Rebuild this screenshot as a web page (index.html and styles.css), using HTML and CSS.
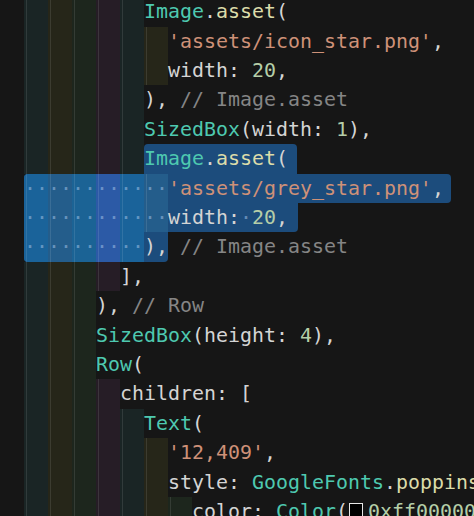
FILE: index.html
```html
<!DOCTYPE html>
<html lang="en">
<head>
  <meta charset="UTF-8" />
  <title>main.dart</title>
  <link rel="stylesheet" href="styles.css">
</head>
<body>
  <!-- Editor lines -->
  <div class="editor">
    <div class="line"><span class="ind cy"></span><span class="ind ye"></span><span class="ind gr"></span><span class="ind pk"></span><span class="ind cy"></span><span class="code"><span class="t">Image</span>.<span class="f">asset</span>(</span></div>
    <div class="line"><span class="ind cy"></span><span class="ind ye"></span><span class="ind gr"></span><span class="ind pk"></span><span class="ind cy"></span><span class="ind ye"></span><span class="code"><span class="s">'assets/icon_star.png'</span>,</span></div>
    <div class="line"><span class="ind cy"></span><span class="ind ye"></span><span class="ind gr"></span><span class="ind pk"></span><span class="ind cy"></span><span class="ind ye"></span><span class="code">width: <span class="n">20</span>,</span></div>
    <div class="line"><span class="ind cy"></span><span class="ind ye"></span><span class="ind gr"></span><span class="ind pk"></span><span class="ind cy"></span><span class="code">), <span class="c">// Image.asset</span></span></div>
    <div class="line"><span class="ind cy"></span><span class="ind ye"></span><span class="ind gr"></span><span class="ind pk"></span><span class="ind cy"></span><span class="code"><span class="t">SizedBox</span>(width: <span class="n">1</span>),</span></div>

    <!-- selected block -->
    <div class="line"><span class="ind cy"></span><span class="ind ye"></span><span class="ind gr"></span><span class="ind pk"></span><span class="ind cy"></span><span class="sel sel-a"><span class="code"><span class="t">Image</span>.<span class="f">asset</span>(</span></span></div>
    <div class="line"><span class="sel sel-b"><span class="ind cy">··</span><span class="ind ye">··</span><span class="ind gr">··</span><span class="ind pk">··</span><span class="ind cy">··</span><span class="ind ye">··</span><span class="code"><span class="s">'assets/grey_star.png'</span>,</span></span></div>
    <div class="line"><span class="sel sel-c"><span class="ind cy">··</span><span class="ind ye">··</span><span class="ind gr">··</span><span class="ind pk">··</span><span class="ind cy">··</span><span class="ind ye">··</span><span class="code">width:<span class="ws">·</span><span class="n">20</span>,</span></span></div>
    <div class="line"><span class="sel sel-d"><span class="ind cy">··</span><span class="ind ye">··</span><span class="ind gr">··</span><span class="ind pk">··</span><span class="ind cy">··</span><span class="code">),</span></span><span class="code"> <span class="c">// Image.asset</span></span></div>

    <div class="line"><span class="ind cy"></span><span class="ind ye"></span><span class="ind gr"></span><span class="ind pk"></span><span class="code">],</span></div>
    <div class="line"><span class="ind cy"></span><span class="ind ye"></span><span class="ind gr"></span><span class="code">), <span class="c">// Row</span></span></div>
    <div class="line"><span class="ind cy"></span><span class="ind ye"></span><span class="ind gr"></span><span class="code"><span class="t">SizedBox</span>(height: <span class="n">4</span>),</span></div>
    <div class="line"><span class="ind cy"></span><span class="ind ye"></span><span class="ind gr"></span><span class="code"><span class="t">Row</span>(</span></div>
    <div class="line"><span class="ind cy"></span><span class="ind ye"></span><span class="ind gr"></span><span class="ind pk"></span><span class="code">children: [</span></div>
    <div class="line"><span class="ind cy"></span><span class="ind ye"></span><span class="ind gr"></span><span class="ind pk"></span><span class="ind cy"></span><span class="code"><span class="t">Text</span>(</span></div>
    <div class="line"><span class="ind cy"></span><span class="ind ye"></span><span class="ind gr"></span><span class="ind pk"></span><span class="ind cy"></span><span class="ind ye"></span><span class="code"><span class="s">'12,409'</span>,</span></div>
    <div class="line"><span class="ind cy"></span><span class="ind ye"></span><span class="ind gr"></span><span class="ind pk"></span><span class="ind cy"></span><span class="ind ye"></span><span class="code">style: <span class="t">GoogleFonts</span>.<span class="f">poppins</span>(</span></div>
    <div class="line"><span class="ind cy"></span><span class="ind ye"></span><span class="ind gr"></span><span class="ind pk"></span><span class="ind cy"></span><span class="ind ye"></span><span class="ind gr"></span><span class="code">color: <span class="t">Color</span>(<span class="swatch"></span><span class="n">0xff000000</span>),</span></div>
  </div>
</body>
</html>
```

FILE: styles.css
```css
/* Editor */
body {
  margin: 0;
  background-color: #161616;
  overflow: hidden;
}

.editor {
  margin-top: -2.7px;
  padding-left: 24px;
  font-family: "DejaVu Sans Mono", monospace;
  font-size: 19.93px;
  color: #d4d4d4;
}

.line {
  display: flex;
  height: 29.4px;
  line-height: 29.4px;
  white-space: pre;
}

.code {
  flex: none;
}

/* Indent rainbow + guide line */
.ind {
  flex: none;
  width: 24px;
  background-image: linear-gradient(90deg, transparent 2px, rgba(255, 255, 255, 0.1) 2px, rgba(255, 255, 255, 0.1) 3px, transparent 3px);
}

.cy { background-color: rgba(79, 236, 236, 0.07); }
.ye { background-color: rgba(255, 255, 64, 0.07); }
.gr { background-color: rgba(127, 255, 127, 0.07); }
.pk { background-color: rgba(255, 127, 255, 0.07); }

/* Selection */
.sel {
  display: flex;
  flex: none;
  background-color: #1c4c7c;
  overflow: hidden;
}

.sel-a { border-radius: 4px 4px 0 0; padding-right: 9px; }
.sel-b { border-radius: 4px 4px 4px 0; padding-right: 7px; }
.sel-c { border-radius: 0 0 4px 0; padding-right: 10px; }
.sel-d { border-radius: 0 0 4px 4px; }

.sel .cy { background-color: #1a639a; }
.sel .ye { background-color: #245d8b; }
.sel .gr { background-color: #1b6395; }
.sel .pk { background-color: #2c5aa6; }

.sel .ind,
.ws {
  color: rgba(160, 195, 230, 0.55);
}

/* Syntax colours */
.t { color: #4ec9b0; }
.f { color: #dcdcaa; }
.s { color: #ce9178; }
.n { color: #b5cea8; }
.c { color: #858585; }

.swatch {
  display: inline-block;
  width: 12px;
  height: 13px;
  margin: 0 5px 0 1px;
  border: 1px solid #e8e8e8;
  background-color: #000000;
  vertical-align: 0;
}
```
